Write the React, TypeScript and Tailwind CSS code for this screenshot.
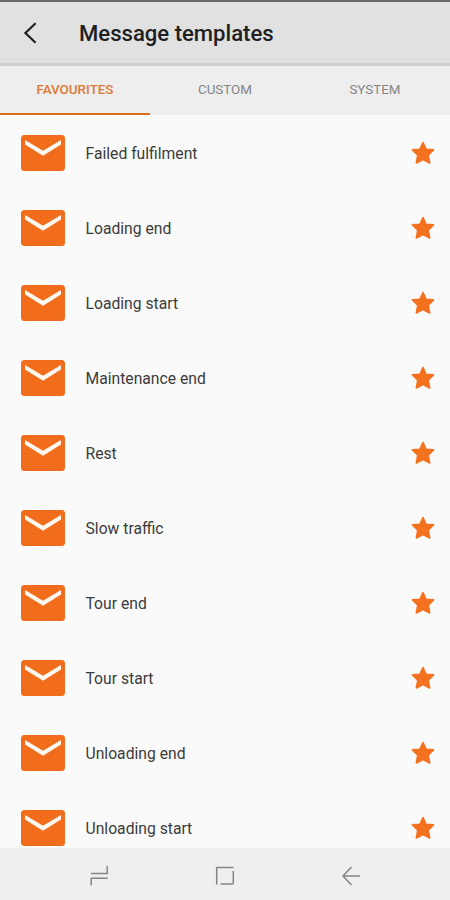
const templates = [
  'Failed fulfilment',
  'Loading end',
  'Loading start',
  'Maintenance end',
  'Rest',
  'Slow traffic',
  'Tour end',
  'Tour start',
  'Unloading end',
  'Unloading start',
];

function Envelope() {
  return (
    <svg width="44" height="36" viewBox="0 0 44 36" className="shrink-0">
      <rect width="44" height="36" rx="3.5" fill="#f26d1b" />
      <path d="M4 5v4.6l18 11.2 18-11.2V5L22 15.8Z" fill="#fff8f0" />
    </svg>
  );
}

function Star() {
  return (
    <svg width="24" height="24" viewBox="0 0 24 24" className="shrink-0">
      <path
        d="M12 1.5 15 8.2l7.5.7-5.3 5.3 1.5 7.8L12 18.5 5.3 22l1.5-7.8-5.3-5.3L9 8.2Z"
        fill="#f4711f"
        stroke="#f4711f"
        strokeWidth="1.6"
        strokeLinejoin="round"
      />
    </svg>
  );
}

export default function App() {
  return (
    <div className="flex h-[900px] w-[450px] flex-col overflow-hidden bg-[#fafafa] font-['Roboto',sans-serif]">
      <div className="h-0.5 shrink-0 bg-[#686868]" />
      <header className="flex h-16 shrink-0 items-center border-b-3 border-[#cecece] bg-[#e1e1e1]">
        <button className="ml-5 flex size-6 items-center justify-center" aria-label="Back">
          <svg width="24" height="24" viewBox="0 0 24 24" fill="none" stroke="#202020" strokeWidth="2.2">
            <path d="M15.6 2.2 5.4 12l10.2 9.8" />
          </svg>
        </button>
        <h1 className="ml-[35px] text-[22.1px] leading-7 font-medium text-[#202020]">Message templates</h1>
      </header>
      <nav className="grid h-[49px] shrink-0 grid-cols-3 bg-[#eeeeee] text-[13.4px]">
        <button className="border-b-2 border-[#dc701f] pt-0.5 font-medium text-[#dc7a35]">FAVOURITES</button>
        <button className="border-b-2 border-transparent pt-0.5 text-[#858585]">CUSTOM</button>
        <button className="border-b-2 border-transparent pt-0.5 text-[#858585]">SYSTEM</button>
      </nav>
      <ul className="min-h-0 flex-1 overflow-hidden">
        {templates.map((name) => (
          <li key={name} className="flex h-[75px] items-center pr-[15px] pl-[21px]">
            <Envelope />
            <span className="ml-[20.5px] flex-1 pt-[3px] text-[15.7px] text-[#3c3c3c]">{name}</span>
            <Star />
          </li>
        ))}
      </ul>
      <footer className="grid h-[52px] shrink-0 grid-cols-3 items-center justify-items-center bg-[#efefef] px-9 pt-1">
        <svg width="20" height="20" viewBox="0 0 20 20" fill="none" stroke="#858585" strokeWidth="1.5">
          <path d="M2 7.5h16.2V0M2.2 19.5v-7.2H18.7" />
        </svg>
        <svg width="20" height="20" viewBox="0 0 20 20" fill="none" stroke="#858585" strokeWidth="1.5">
          <path d="M1.7 18.5v-17h16.8M18.3 5v11.7q0 1.3-1.3 1.3H5.5" />
        </svg>
        <svg width="20" height="20" viewBox="0 0 20 20" fill="none" stroke="#858585" strokeWidth="1.5">
          <path d="M10.5 1 2 10l8.5 9M2 10h17" />
        </svg>
      </footer>
    </div>
  );
}
